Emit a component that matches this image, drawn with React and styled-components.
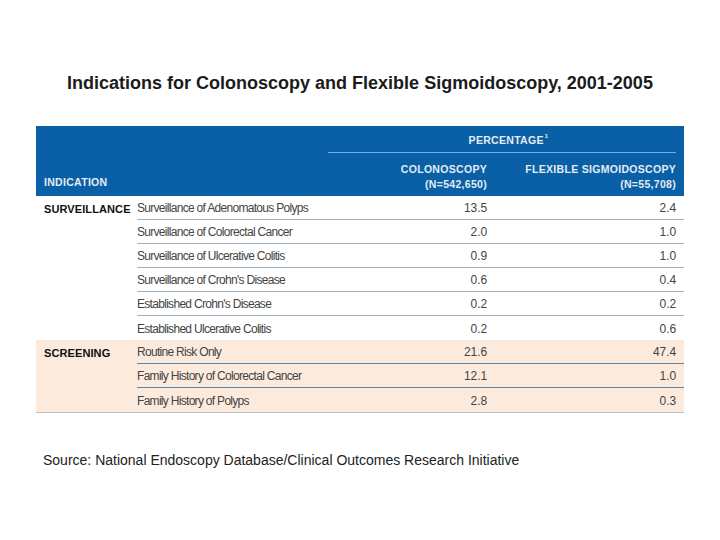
import React from "react";
import styled, { createGlobalStyle } from "styled-components";

const sections = [
    {
        name: "SURVEILLANCE",
        tint: false,
        rows: [
            ["Surveillance of Adenomatous Polyps", "13.5", "2.4"],
            ["Surveillance of Colorectal Cancer", "2.0", "1.0"],
            ["Surveillance of Ulcerative Colitis", "0.9", "1.0"],
            ["Surveillance of Crohn's Disease", "0.6", "0.4"],
            ["Established Crohn's Disease", "0.2", "0.2"],
            ["Established Ulcerative Colitis", "0.2", "0.6"],
        ],
    },
    {
        name: "SCREENING",
        tint: true,
        rows: [
            ["Routine Risk Only", "21.6", "47.4"],
            ["Family History of Colorectal Cancer", "12.1", "1.0"],
            ["Family History of Polyps", "2.8", "0.3"],
        ],
    },
];

const GlobalStyle = createGlobalStyle`
    body {
        margin: 0;
        background: #fff;
        font-family: "Liberation Sans", Arial, sans-serif;
    }
`;

const Page = styled.div`
    width: 720px;
    height: 540px;
    padding: 73px 36px 0;
    box-sizing: border-box;
`;

const Title = styled.h1`
    margin: 0 0 33px;
    text-align: center;
    font-size: 18px;
    font-weight: bold;
    color: #1b1b1b;
    line-height: 20px;
`;

const Table = styled.div`
    width: 648px;
    font-family: "Liberation Sans", Arial, sans-serif;
`;

const Head = styled.div`
    background: #0a60a6;
    height: 70px;
    display: grid;
    grid-template-columns: 101px 1fr 160px 189px 8px;
    grid-template-rows: 26px 1px 1fr;
    color: #e4ecf4;
    font-weight: bold;
    font-size: 10.5px;
    letter-spacing: 0.3px;
`;

const Percent = styled.div`
    grid-column: 3 / 5;
    grid-row: 1;
    align-self: end;
    text-align: center;
    padding: 0 0 6px 14px;
    line-height: 14px;

    sup {
        font-size: 6px;
        position: relative;
        top: -1px;
        margin-left: 1px;
    }
`;

const Rule = styled.div`
    grid-column: 3 / 5;
    grid-row: 2;
    background: #66b2ef;
    margin-left: 1px;
`;

const HeadCell = styled.div`
    grid-row: 3;
    grid-column: ${(p) => p.$col};
    text-align: ${(p) => (p.$right ? "right" : "left")};
    padding-left: ${(p) => (p.$right ? "0" : "8px")};
    padding-top: 9px;
    line-height: 15px;
    display: flex;
    flex-direction: column;
    justify-content: ${(p) => (p.$right ? "flex-start" : "flex-end")};
    padding-bottom: ${(p) => (p.$right ? "0" : "6px")};
`;

const Section = styled.div`
    display: grid;
    grid-template-columns: 101px 1fr;
    background: ${(p) => (p.$tint ? "#fcebdc" : "#fff")};
    border-bottom: ${(p) => (p.$last ? "1px solid #b9c1c8" : "none")};
`;

const GroupName = styled.div`
    padding: 6px 0 0 8px;
    font-weight: bold;
    font-size: 11px;
    letter-spacing: 0.1px;
    color: #111;
    line-height: 14px;
`;

const Row = styled.div`
    display: grid;
    grid-template-columns: 1fr 160px 189px;
    padding-right: 8px;
    height: 24px;
    box-sizing: border-box;
    align-items: center;
    font-size: 12px;
    letter-spacing: -0.7px;
    color: #444;
    white-space: nowrap;
    padding-top: 1px;
    border-bottom: ${(p) => (p.$last ? "none" : `1px solid ${p.$line}`)};
`;

const Num = styled.div`
    text-align: right;
    letter-spacing: -0.1px;
`;

const Source = styled.p`
    margin: 39px 0 0 7px;
    font-size: 14px;
    color: #222;
    line-height: 16px;
`;

const App = () => {
    return (
        <Page>
            <GlobalStyle />
            <Title>Indications for Colonoscopy and Flexible Sigmoidoscopy, 2001-2005</Title>
            <Table>
                <Head>
                    <Percent>
                        PERCENTAGE<sup>1</sup>
                    </Percent>
                    <Rule />
                    <HeadCell $col={1}>INDICATION</HeadCell>
                    <HeadCell $col={3} $right>
                        <span>COLONOSCOPY</span>
                        <span>(N=542,650)</span>
                    </HeadCell>
                    <HeadCell $col={4} $right>
                        <span>FLEXIBLE SIGMOIDOSCOPY</span>
                        <span>(N=55,708)</span>
                    </HeadCell>
                </Head>
                {sections.map((s, si) => (
                    <Section key={s.name} $tint={s.tint} $last={si === sections.length - 1}>
                        <GroupName>{s.name}</GroupName>
                        <div>
                            {s.rows.map((r, i) => (
                                <Row
                                    key={r[0]}
                                    $last={i === s.rows.length - 1}
                                    $line={s.tint ? "#5d86ab" : "#9fb0bd"}
                                >
                                    <div>{r[0]}</div>
                                    <Num>{r[1]}</Num>
                                    <Num>{r[2]}</Num>
                                </Row>
                            ))}
                        </div>
                    </Section>
                ))}
            </Table>
            <Source>Source: National Endoscopy Database/Clinical Outcomes Research Initiative</Source>
        </Page>
    );
};

export default App;
